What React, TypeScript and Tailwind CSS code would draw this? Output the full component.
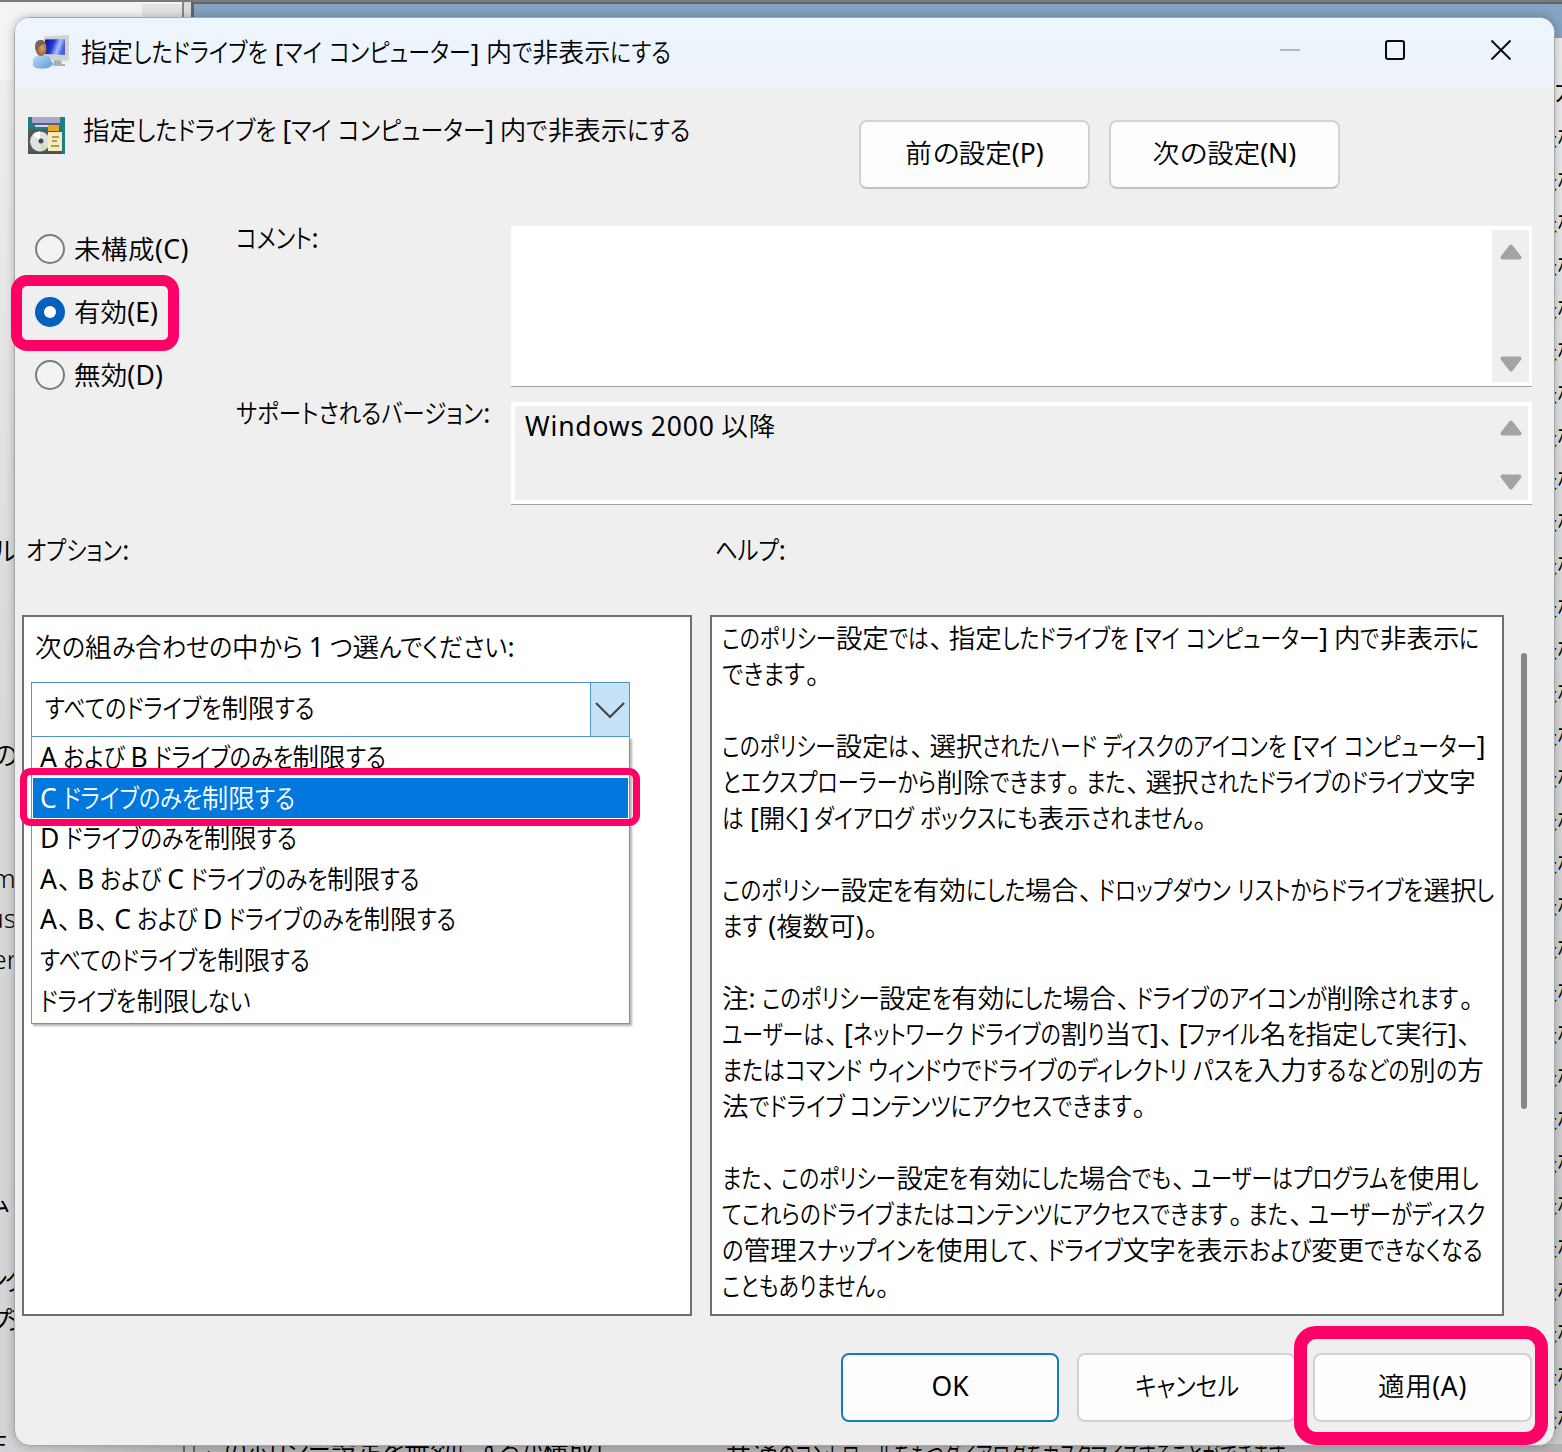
import React, { useLayoutEffect, useRef } from "react";

interface FitTextProps {
  text: string;
  width: number;
  className?: string;
}

// Kana is set narrower than kanji and latin, so only the kana runs are condensed
const FitText: React.FC<FitTextProps> = ({ text, width, className = "" }) => {
  const ref = useRef<HTMLSpanElement>(null);
  const runs = text.match(/[\u3001\u3002]|[\u3003-\u30ff]+|[\x20-\x7e]+|[^\x20-\x7e\u3001-\u30ff]+/g) ?? [];
  const hasKana = /[\u3003-\u30ff]/.test(text);

  useLayoutEffect(() => {
    const root = ref.current;
    if (!root) return;
    if (!hasKana) {
      root.style.letterSpacing = "0px";
      const natural = root.getBoundingClientRect().width;
      root.style.letterSpacing = `${(width - natural) / text.length}px`;
      return;
    }
    const outers = Array.from(root.querySelectorAll<HTMLElement>("[data-kana]"));
    outers.forEach((el) => (el.style.width = "auto"));
    const total = root.getBoundingClientRect().width;
    const sizes = outers.map((el) => el.offsetWidth);
    const kana = sizes.reduce((a, b) => a + b, 0);
    const k = (width - (total - kana)) / kana;
    outers.forEach((el, i) => {
      const inner = el.firstElementChild as HTMLElement;
      el.style.width = `${sizes[i] * k}px`;
      inner.style.transform = `scaleX(${k})`;
    });
  }, [text, width, hasKana]);

  return (
    <span ref={ref} className={`inline-block shrink-0 whitespace-pre ${className}`}>
      {runs.map((run, i) => {
        if (/[\u3001\u3002]/.test(run)) {
          return (
            <span key={i} className="inline-block w-5 pl-px [font-feature-settings:'palt']">
              {run}
            </span>
          );
        }
        if (/[\u3003-\u30ff]/.test(run)) {
          return (
            <span key={i} data-kana className="inline-block">
              <span className="inline-block origin-left [font-feature-settings:'palt']">{run}</span>
            </span>
          );
        }
        return (
          <span key={i} className={/[\x20-\x7e]/.test(run) ? "font-normal" : ""}>
            {run}
          </span>
        );
      })}
    </span>
  );
};

const UserMonitorIcon = () => (
  <svg className="size-9 shrink-0" viewBox="0 0 36 36">
    <defs>
      <linearGradient id="screen" x1="0" y1="0" x2="1" y2="0.3">
        <stop offset="0" stopColor="#0a0f9c" />
        <stop offset="0.45" stopColor="#2036d8" />
        <stop offset="0.75" stopColor="#a9c4f8" />
        <stop offset="1" stopColor="#3f62e8" />
      </linearGradient>
      <linearGradient id="shirt" x1="0" y1="0" x2="1" y2="1">
        <stop offset="0" stopColor="#b9dcf8" />
        <stop offset="1" stopColor="#5b9ad4" />
      </linearGradient>
      <radialGradient id="face" cx="0.6" cy="0.5" r="0.6">
        <stop offset="0" stopColor="#d9a066" />
        <stop offset="1" stopColor="#8a5a34" />
      </radialGradient>
    </defs>
    <path d="M21 25h7l1 4h3v2H20z" fill="#a9b3ac" />
    <path d="M11 1.500 36 0v25l-4 1-21-2z" fill="#d0d3d0" />
    <path d="M12 4.500 32 4v16L12 19z" fill="url(#screen)" />
    <path d="M0 25q2-5 9-5 8 0 9 5l2 4q-3 5-11 4.500Q3 34 0 31z" fill="url(#shirt)" />
    <ellipse cx="8" cy="13" rx="5.500" ry="8" fill="url(#face)" />
    <path d="M2 12Q2 4.500 8 5q4 .5 4.500 4-4 0-6.500 3-1 3-3 4z" fill="#7a6350" />
  </svg>
);

const PolicyIcon = () => (
  <svg className="size-[37px] shrink-0" viewBox="0 0 37 37">
    <path d="M0 0h37v37H0z" fill="#1b7f84" />
    <path d="M4 0h28v6H4z" fill="#a9a7cf" />
    <path d="M4 6h28v2H4z" fill="#5d5a86" />
    <path d="M7 8h14v2H7z" fill="#d8d8e8" />
    <path d="M0 12h34v25H0z" fill="#55585a" />
    <path d="M20 8h11v6H20z" fill="#e9a81d" />
    <circle cx="12" cy="24.500" r="10" fill="#e0e0e3" />
    <path d="M12 24 5 17a10 10 0 0 1 7-2.500z" fill="#fff" />
    <path d="m12 24 2 10a9 9 0 0 0 5-4z" fill="#c9e3a8" />
    <circle cx="13" cy="24" r="2.500" fill="#4a4a4a" />
    <path d="M20 15h14v19H20z" fill="#f4ebc0" />
    <path d="M24 20h7M24 24h5M23 29h8" stroke="#b39b52" strokeWidth="1.800" />
    <path d="M0 35h34v2H0z" fill="#4a5350" />
  </svg>
);

const Arrow = ({ down = false }: { down?: boolean }) => (
  <svg className={`h-4 w-[22px] ${down ? "rotate-180" : ""}`} viewBox="0 0 22 16">
    <path d="m11 2.500 8.500 11h-17z" fill="#a3a3a3" stroke="#a3a3a3" strokeWidth="4" strokeLinejoin="round" />
  </svg>
);

interface PushButtonProps {
  label: string;
  textWidth: number;
  className: string;
}

const PushButton: React.FC<PushButtonProps> = ({ label, textWidth, className }) => (
  <button className={`flex shrink-0 items-center justify-center rounded-lg bg-[#fdfdfd] pb-[3px] leading-9 ${className}`}>
    <FitText text={label} width={textWidth} />
  </button>
);

interface RadioProps {
  label: string;
  textWidth: number;
  checked?: boolean;
}

const Radio: React.FC<RadioProps> = ({ label, textWidth, checked }) => (
  <label className="flex h-[63px] items-center gap-[9px]">
    {checked ? (
      <span className="flex size-[30px] items-center justify-center rounded-full bg-[#0560bd]">
        <span className="size-3 rounded-full bg-white" />
      </span>
    ) : (
      <span className="size-[30px] rounded-full border-2 border-[#7c7c7c] bg-[#f3f3f3]" />
    )}
    <FitText text={label} width={textWidth} className="mt-0.5" />
  </label>
);

const options = [
  { text: "A および B ドライブのみを制限する", width: 346 },
  { text: "C ドライブのみを制限する", width: 255, selected: true },
  { text: "D ドライブのみを制限する", width: 257 },
  { text: "A、B および C ドライブのみを制限する", width: 380 },
  { text: "A、B、C および D ドライブのみを制限する", width: 416 },
  { text: "すべてのドライブを制限する", width: 270 },
  { text: "ドライブを制限しない", width: 211 },
];

const helpLines = [
  { text: "このポリシー設定では、指定したドライブを [マイ コンピューター] 内で非表示に", width: 757 },
  { text: "できます。", width: 103 },
  { text: "", width: 0 },
  { text: "このポリシー設定は、選択されたハード ディスクのアイコンを [マイ コンピューター]", width: 764 },
  { text: "とエクスプローラーから削除できます。また、選択されたドライブのドライブ文字", width: 753 },
  { text: "は [開く] ダイアログ ボックスにも表示されません。", width: 490 },
  { text: "", width: 0 },
  { text: "このポリシー設定を有効にした場合、ドロップダウン リストからドライブを選択し", width: 773 },
  { text: "ます (複数可)。", width: 162 },
  { text: "", width: 0 },
  { text: "注: このポリシー設定を有効にした場合、ドライブのアイコンが削除されます。", width: 758 },
  { text: "ユーザーは、[ネットワーク ドライブの割り当て]、[ファイル名を指定して実行]、", width: 756 },
  { text: "またはコマンド ウィンドウでドライブのディレクトリ パスを入力するなどの別の方", width: 761 },
  { text: "法でドライブ コンテンツにアクセスできます。", width: 430 },
  { text: "", width: 0 },
  { text: "また、このポリシー設定を有効にした場合でも、ユーザーはプログラムを使用し", width: 757 },
  { text: "てこれらのドライブまたはコンテンツにアクセスできます。また、ユーザーがディスク", width: 763 },
  { text: "の管理スナップインを使用して、ドライブ文字を表示および変更できなくなる", width: 761 },
  { text: "こともありません。", width: 173 },
];

// The console windows behind the dialog; only their edges stay visible
const Backdrop = () => (
  <div className="absolute inset-0 bg-[#d3d3d3]">
    <div className="absolute inset-x-0 top-0 flex h-20 border-t-2 border-[#7d7977]">
      <div className="flex w-[184px] justify-end border-r-2 border-[#858585] bg-[#f4f4f4]">
        <div className="mt-0.5 w-10 bg-[#e3e3e3]" />
      </div>
      <div className="w-[7px] bg-[#dcdce0]" />
      <div className="h-[37px] flex-1 border-t-2 border-l-3 border-[#5e656e] bg-[#84a3c2]" />
    </div>
    <div className="absolute top-20 bottom-0 left-0 w-5 bg-linear-to-b from-[#eeeeee] via-[#d6d8d5] to-[#d2d3d5]" />
    <div className="absolute top-[38px] right-0 bottom-0 w-4 bg-linear-to-b from-[#ececec] via-[#d6d6d6] to-[#c9c9c9]" />
    <div className="absolute inset-x-0 bottom-0 h-2 bg-[#b3b1b1]" />
    <div className="absolute bottom-0 left-0 h-2 w-[184px] bg-linear-to-r from-[#d2d4d6] to-[#b8b8b8]" />
    <div className="absolute bottom-0 left-[183px] h-2 w-3 border-x-2 border-[#666] bg-[#bbb]" />
    <span className="absolute top-[533px] -left-2 leading-9">ル</span>
    <span className="absolute top-[737px] -left-2 leading-9">の</span>
    <span className="absolute top-[860px] -left-2 leading-9">m</span>
    <span className="absolute top-[900px] -left-3 leading-9">us</span>
    <span className="absolute top-[941px] -left-2 leading-9">er</span>
    <span className="absolute top-[1183px] -left-4 leading-9">ム</span>
    <span className="absolute top-[1262px] -left-[18px] leading-9 tracking-[-4px]">ング</span>
    <span className="absolute top-[1302px] -left-[14px] leading-9 tracking-[-7px]">プシ</span>
    <span className="absolute top-[1425px] -left-[18px] leading-9">主</span>
    <span className="absolute top-[73px] left-[1553px] leading-9">カ</span>
    <div className="absolute top-[116px] left-[1531px] flex flex-col whitespace-nowrap">
      {[...Array(31)].map((_, i) => (
        <span key={i} className="h-[42.7px] leading-[42.7px]">
          未構成
        </span>
      ))}
    </div>
    <div className="absolute top-[1431px] left-[205px] leading-9">
      <FitText text="このポリシー設定を無効にするか構成し" width={410} />
    </div>
    <div className="absolute top-[1437px] left-[725px] leading-9">
      <FitText text="共通のコントロールをもつダイアログをカスタマイズすることができます" width={560} />
    </div>
  </div>
);

const TitleBar = () => (
  <div className="flex h-[70px] items-start rounded-t-[14px] bg-linear-to-b from-[#edf5fc] to-[#eef2f9] pt-[17px] pl-[18px]">
    <UserMonitorIcon />
    <div className="-mt-px ml-3 w-[1199px] text-[26px] leading-[36px] [word-spacing:0px]">
      <FitText text="指定したドライブを [マイ コンピューター] 内で非表示にする" width={590} />
    </div>
    <svg className="mt-[5px] h-5 w-[232px]" viewBox="0 0 232 20" fill="none" stroke="#0a0a0a" strokeWidth="2">
      <path d="M0 10h20" stroke="#b5b9bd" />
      <rect x="106" y="1" width="18" height="18" rx="2" />
      <path d="m211.500.5 19 19m0-19-19 19" />
    </svg>
  </div>
);

const SettingHeader = () => (
  <div className="flex h-[138px] items-start pl-[13px]">
    <div className="pt-[29px]">
      <PolicyIcon />
    </div>
    <div className="ml-[18px] w-[776px] pt-6 leading-9">
      <FitText text="指定したドライブを [マイ コンピューター] 内で非表示にする" width={607} />
    </div>
    <div className="flex gap-[19px] pt-8">
      <PushButton label="前の設定(P)" textWidth={138} className="h-[69px] w-[231px] border-2 border-[#d2d2d2] border-b-[#c2c2c2]" />
      <PushButton label="次の設定(N)" textWidth={143} className="h-[69px] w-[231px] border-2 border-[#d2d2d2] border-b-[#c2c2c2]" />
    </div>
  </div>
);

const SettingState = () => (
  <div className="flex h-[307px]">
    <div className="-mt-[9px] w-[221px] pl-5">
      <Radio label="未構成(C)" textWidth={115} />
      <Radio label="有効(E)" textWidth={84} checked />
      <Radio label="無効(D)" textWidth={89} />
    </div>
    <div className="-mt-1.5 flex w-[275px] flex-col gap-[139px] leading-9">
      <div className="h-9">
        <FitText text="コメント:" width={83} />
      </div>
      <div className="h-9">
        <FitText text="サポートされるバージョン:" width={254} />
      </div>
    </div>
    <div className="flex w-[1021px] flex-col gap-[15px]">
      <div className="flex h-[161px] justify-end border-b border-[#a0a0a0] bg-white px-[3px] py-1">
        <div className="flex w-[37px] flex-col items-center justify-between bg-[#efefef] pt-[14px] pb-2.5">
          <Arrow />
          <Arrow down />
        </div>
      </div>
      <div className="flex h-[103px] justify-between border-b border-[#a0a0a0]">
        <div className="flex flex-1 justify-between border-4 border-white bg-[#efefef] pr-1.5 pl-[10px]">
          <div className="pt-0.5 leading-9">
            <FitText text="Windows 2000 以降" width={251} />
          </div>
          <div className="flex flex-col justify-between pt-[14px] pb-[10px]">
            <Arrow />
            <Arrow down />
          </div>
        </div>
      </div>
    </div>
  </div>
);

const OptionsPanel = () => (
  <div className="w-[670px] border-2 border-[#6f6f6f] bg-white pt-[13px] pl-[7px]">
    <div className="-mt-px pl-1 leading-9">
      <FitText text="次の組み合わせの中から 1 つ選んでください:" width={478} />
    </div>
    <div className="mt-[17px] flex h-[55px] w-[599px] border border-[#4f96d4]">
      <div className="flex-1 pt-[7px] pl-[13px] leading-9">
        <FitText text="すべてのドライブを制限する" width={269} />
      </div>
      <div className="flex w-[39px] items-center justify-center border-l border-[#4f96d4] bg-[#c5e2f8]">
        <svg className="h-[18px] w-[30px]" viewBox="0 0 30 18" fill="none" stroke="#40454a" strokeWidth="2.200">
          <path d="m1 2 14 14L29 2" />
        </svg>
      </div>
    </div>
    <div className="h-[287px] w-[599px] border border-t-0 border-[#8f8f8f] px-px shadow-[2px_2px_2px_rgba(0,0,0,0.3)]">
      {options.map((option) => (
        <div
          key={option.text}
          className={`h-[40.6px] pl-[7px] leading-[40.6px] ${option.selected ? "bg-[#0078dd] text-white" : ""}`}
        >
          <FitText text={option.text} width={option.width} />
        </div>
      ))}
    </div>
  </div>
);

const HelpPanel = () => (
  <div className="w-[794px] border-2 border-[#6f6f6f] bg-white pt-[3px] pl-[10px]">
    {helpLines.map((line, i) => (
      <div key={i} className="h-9 leading-9">
        {line.text && <FitText text={line.text} width={line.width} />}
      </div>
    ))}
  </div>
);

export default function App() {
  return (
    <div
      lang="ja"
      className="relative h-[1452px] w-[1562px] overflow-hidden font-['Noto_Sans','Noto_Sans_CJK_JP',sans-serif] text-[26.5px] font-[350] text-black [word-spacing:-1px]"
    >
      <Backdrop />

      <div className="absolute top-[17px] left-[14px] flex h-[1429px] w-[1541px] flex-col rounded-[16px] border border-[#a5a9ac] bg-[#efefef] shadow-[0_0_10px_rgba(0,0,0,0.25)]">
        <TitleBar />
        <SettingHeader />
        <SettingState />

        <div className="-mt-px flex h-[83px] pl-[11px] leading-9">
          <div className="w-[689px]">
            <FitText text="オプション:" width={103} />
          </div>
          <FitText text="ヘルプ:" width={71} />
        </div>

        <div className="flex h-[701px] gap-[18px] pl-[7px]">
          <OptionsPanel />
          <HelpPanel />
          <div className="-ml-px mt-[38px] h-[456px] w-[6px] rounded-full bg-[#868686]" />
        </div>

        <div className="flex pt-[37px] pl-[826px]">
          <PushButton label="OK" textWidth={37} className="h-[69px] w-[218px] border-2 border-[#0c80b8]" />
          <PushButton label="キャンセル" textWidth={104} className="ml-[18px] h-[69px] w-[219px] border-2 border-[#d2d2d2]" />
          <PushButton label="適用(A)" textWidth={89} className="ml-[17px] h-[69px] w-[219px] border-2 border-[#d2d2d2]" />
        </div>
      </div>

      {/* Step highlights */}
      <div className="absolute top-[275px] left-[11px] h-[76px] w-[168px] rounded-[16px] border-[11.500px] border-[#ff0066]" />
      <div className="absolute top-[768px] left-[20px] h-[58px] w-[620px] rounded-[11px] border-[7px] border-[#ff0066]" />
      <div className="absolute top-[1326px] left-[1294px] h-[119px] w-[254px] rounded-[22px] border-[13px] border-[#ff0066]" />
    </div>
  );
}
